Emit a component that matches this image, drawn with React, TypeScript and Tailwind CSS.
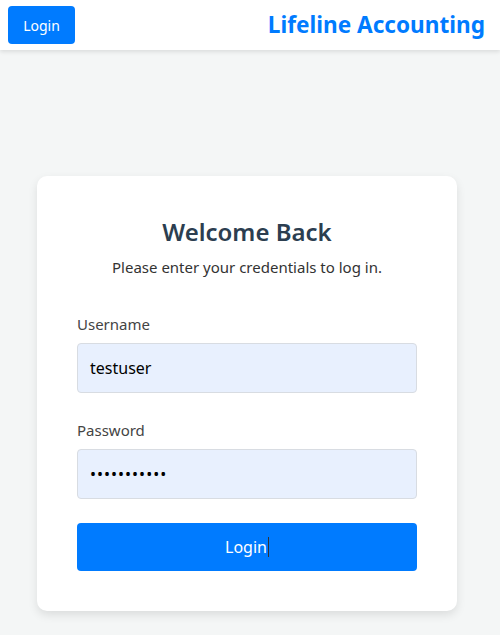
import React from "react";

export default function App() {
  const font = { fontFamily: '"Noto Sans", "Open Sans", sans-serif' };
  return (
    <div className="min-h-[635px] bg-[#f4f6f6]" style={font}>
      <header className="flex h-[50px] items-center justify-between bg-white pl-2 pr-[15px] shadow-[0_2px_4px_rgba(0,0,0,0.1)]">
        <button className="h-[38px] w-[67px] rounded-[4px] bg-[#007bff] text-[14px] text-white">
          Login
        </button>
        <h1 className="text-[22.6px] font-bold leading-none text-[#007bff]">Lifeline Accounting</h1>
      </header>
      <div className="flex justify-center pr-[6px] pt-[126px]">
        <div className="w-[420px] rounded-[10px] bg-white px-10 pb-10 pt-[40px] shadow-[0_4px_10px_rgba(0,0,0,0.1)]">
          <h2 className="text-center text-[24px] font-semibold leading-[32px] text-[#2c3e50]">Welcome Back</h2>
          <p className="mt-[8px] text-center text-[15px] leading-[22px] text-[#333]">
            Please enter your credentials to log in.
          </p>
          <div className="mt-[35px]">
            <label className="block text-[15px] leading-[22px] text-[#444]">Username</label>
            <div className="mt-[8px] flex h-[50px] items-center rounded-[4px] border border-[#d8dce2] bg-[#e8f0fe] px-[12px] text-[16px] text-black">
              testuser
            </div>
          </div>
          <div className="mt-[26px]">
            <label className="block text-[15px] leading-[22px] text-[#444]">Password</label>
            <div className="mt-[8px] flex h-[50px] items-center rounded-[4px] border border-[#d8dce2] bg-[#e8f0fe] px-[12px] text-[16px] tracking-[1px] text-black">
              •••••••••••
            </div>
          </div>
          <button className="mt-[24px] flex h-[48px] w-full items-center justify-center rounded-[4px] bg-[#007bff] text-[16px] text-white">
            <span>Login</span>
            <span className="ml-[1px] inline-block h-[20px] w-px bg-[#333]" />
          </button>
        </div>
      </div>
    </div>
  );
}
